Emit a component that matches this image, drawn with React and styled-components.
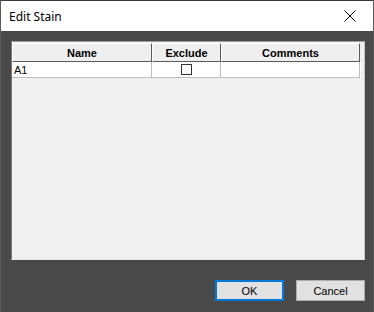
import React from 'react';
import styled, { createGlobalStyle } from 'styled-components';

const Global = createGlobalStyle`
    html, body {
        margin: 0;
        padding: 0;
        background: #4a4a4a;
    }
`

// Window

const Window = styled.div`
    width: 374px;
    height: 312px;
    box-sizing: border-box;
    display: flex;
    flex-direction: column;
    background: #494949;
    border-left: 1px solid #5a5a5a;
    border-top: 1px solid #3a3a3a;
    border-right: 1px solid #5a5a5a;
`

const TitleBar = styled.div`
    height: 30px;
    flex: none;
    display: flex;
    align-items: center;
    justify-content: space-between;
    background: #ffffff;
    padding-left: 8px;
    font-family: "Segoe UI", "Noto Sans", sans-serif;
    font-size: 12px;
    color: #000;
`

const CloseBtn = styled.div`
    width: 46px;
    height: 30px;
    display: flex;
    align-items: center;
    justify-content: center;
`

const Body = styled.div`
    flex: 1;
    display: flex;
    flex-direction: column;
    padding: 10px 8px 11px 10px;
`

// Table

const Panel = styled.div`
    height: 219px;
    box-sizing: border-box;
    background: #f0f0f0;
    border-top: 1px solid #a0a0a0;
    border-left: 1px solid #7a7a7a;
    border-right: 1px solid #c8c8c8;
    border-bottom: 1px solid #e8e8e8;
    padding: 1px 3px 0 0;
`

const Row = styled.div`
    display: grid;
    grid-template-columns: 140px 69px 139px;
    height: ${p => p.header ? '19px' : '16px'};
    background: ${p => p.header ? '#efefef' : '#ffffff'};
`

const Cell = styled.div`
    box-sizing: border-box;
    display: flex;
    align-items: center;
    justify-content: ${p => p.left ? 'flex-start' : 'center'};
    padding-left: ${p => p.left ? '2px' : '0'};
    font-family: "Liberation Sans", Arial, sans-serif;
    font-size: 11px;
    color: #000;
    border-right: 1px solid ${p => p.header ? '#5a5a5a' : '#bdbdbd'};
    border-bottom: 1px solid ${p => p.header ? '#5a5a5a' : '#bdbdbd'};
    border-left: ${p => p.header ? '1px solid #ffffff' : 'none'};
    border-top: ${p => p.header ? '1px solid #ffffff' : 'none'};
    font-weight: ${p => p.header ? 'bold' : 'normal'};
`

const CheckBox = styled.span`
    width: 11px;
    height: 11px;
    box-sizing: border-box;
    border: 1px solid #333;
    background: #fff;
`

// Footer

const Footer = styled.div`
    flex: 1;
    display: flex;
    justify-content: flex-end;
    align-items: flex-end;
    gap: 12px;
`

const Button = styled.button`
    width: 69px;
    height: 21px;
    box-sizing: border-box;
    margin: 0;
    padding: 0;
    background: #e1e1e1;
    border: ${p => p.primary ? '2px solid #0078d7' : '1px solid #adadad'};
    font-family: "Liberation Sans", Arial, sans-serif;
    font-size: 11px;
    color: #000;
`

const App = () => {
    return (
        <Window>
            <Global />
            <TitleBar>
                <span>Edit Stain</span>
                <CloseBtn>
                    <svg width="12" height="12" viewBox="0 0 12 12">
                        <path d="M0.5 0.5 L11.5 11.5 M11.5 0.5 L0.5 11.5" stroke="#000" strokeWidth="1" />
                    </svg>
                </CloseBtn>
            </TitleBar>
            <Body>
                <Panel>
                    <Row header>
                        <Cell header>Name</Cell>
                        <Cell header>Exclude</Cell>
                        <Cell header>Comments</Cell>
                    </Row>
                    <Row>
                        <Cell left>A1</Cell>
                        <Cell><CheckBox /></Cell>
                        <Cell></Cell>
                    </Row>
                </Panel>
                <Footer>
                    <Button primary>OK</Button>
                    <Button>Cancel</Button>
                </Footer>
            </Body>
        </Window>
    )
}

export default App;
